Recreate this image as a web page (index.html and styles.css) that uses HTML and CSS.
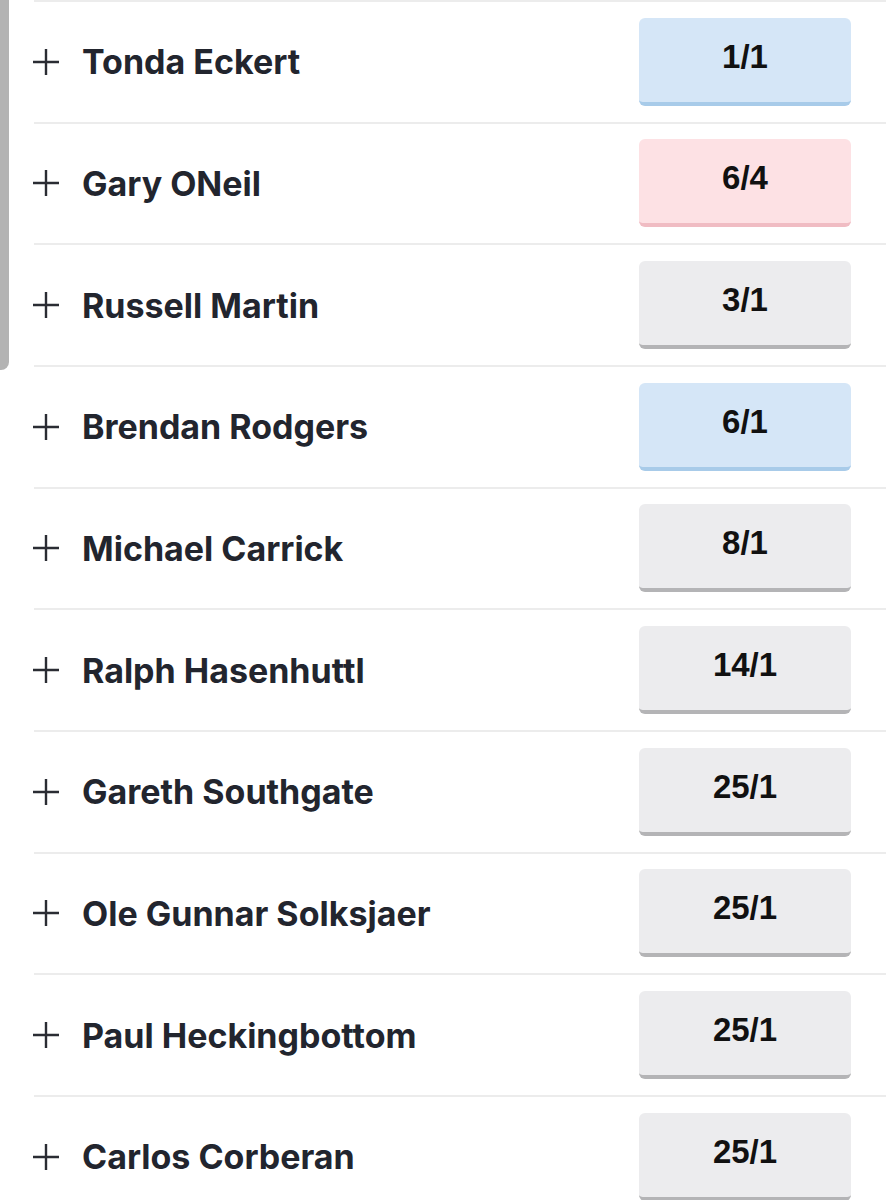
FILE: index.html
```html
<!DOCTYPE html>
<html lang="en">
<head>
<meta charset="utf-8">
<title>Odds</title>
<link rel="stylesheet" href="styles.css">
</head>
<body>
<div class="scrollbar"></div>
<ul class="market">
  <li class="row"><span class="plus"><svg viewBox="0 0 28 28" width="28" height="28"><path d="M14 1v26M1 14h26"/></svg></span><span class="name">Tonda Eckert</span><button class="odds blue">1/1</button></li>
  <li class="row"><span class="plus"><svg viewBox="0 0 28 28" width="28" height="28"><path d="M14 1v26M1 14h26"/></svg></span><span class="name">Gary ONeil</span><button class="odds pink">6/4</button></li>
  <li class="row"><span class="plus"><svg viewBox="0 0 28 28" width="28" height="28"><path d="M14 1v26M1 14h26"/></svg></span><span class="name">Russell Martin</span><button class="odds">3/1</button></li>
  <li class="row"><span class="plus"><svg viewBox="0 0 28 28" width="28" height="28"><path d="M14 1v26M1 14h26"/></svg></span><span class="name">Brendan Rodgers</span><button class="odds blue">6/1</button></li>
  <li class="row"><span class="plus"><svg viewBox="0 0 28 28" width="28" height="28"><path d="M14 1v26M1 14h26"/></svg></span><span class="name">Michael Carrick</span><button class="odds">8/1</button></li>
  <li class="row"><span class="plus"><svg viewBox="0 0 28 28" width="28" height="28"><path d="M14 1v26M1 14h26"/></svg></span><span class="name">Ralph Hasenhuttl</span><button class="odds">14/1</button></li>
  <li class="row"><span class="plus"><svg viewBox="0 0 28 28" width="28" height="28"><path d="M14 1v26M1 14h26"/></svg></span><span class="name">Gareth Southgate</span><button class="odds">25/1</button></li>
  <li class="row"><span class="plus"><svg viewBox="0 0 28 28" width="28" height="28"><path d="M14 1v26M1 14h26"/></svg></span><span class="name">Ole Gunnar Solksjaer</span><button class="odds">25/1</button></li>
  <li class="row"><span class="plus"><svg viewBox="0 0 28 28" width="28" height="28"><path d="M14 1v26M1 14h26"/></svg></span><span class="name">Paul Heckingbottom</span><button class="odds">25/1</button></li>
  <li class="row"><span class="plus"><svg viewBox="0 0 28 28" width="28" height="28"><path d="M14 1v26M1 14h26"/></svg></span><span class="name">Carlos Corberan</span><button class="odds">25/1</button></li>
</ul>
</body>
</html>
```
FILE: styles.css
```css
* { box-sizing: border-box; }
html, body {
  margin: 0;
  padding: 0;
  background: #ffffff;
  overflow: hidden;
}
body {
  font-family: Inter, Roboto, "Liberation Sans", Arial, sans-serif;
  width: 886px;
  height: 1200px;
  position: relative;
}
.scrollbar {
  position: absolute;
  left: 0;
  top: 0;
  width: 9px;
  height: 370px;
  background: #b3b3b3;
  border-bottom-right-radius: 8px;
}
.market {
  list-style: none;
  margin: 0;
  padding: 0;
}
.row {
  display: flex;
  align-items: center;
  height: 121.67px;
  margin-left: 34px;
  border-top: 2px solid #ececec;
  padding-right: 35px;
}
.plus {
  display: flex;
  width: 28px;
  height: 28px;
  margin-left: -2px;
  margin-right: 22px;
}
.plus svg {
  stroke: #2a2c33;
  stroke-width: 2.4;
  fill: none;
}
.name {
  font-weight: 700;
  font-size: 34px;
  color: #22252e;
  letter-spacing: 0;
}
.odds {
  margin-left: auto;
  width: 212px;
  height: 88px;
  border: 0;
  border-bottom: 4px solid #b4b4b6;
  border-radius: 6px;
  background: #ececee;
  font-family: "Liberation Sans", Arial, sans-serif;
  font-weight: 700;
  font-size: 33px;
  color: #111111;
  padding: 0 0 6px;
  cursor: pointer;
}
.odds.blue {
  background: #d5e6f7;
  border-bottom-color: #a8cbe9;
}
.odds.pink {
  background: #fde1e4;
  border-bottom-color: #f0bcc3;
}
```
